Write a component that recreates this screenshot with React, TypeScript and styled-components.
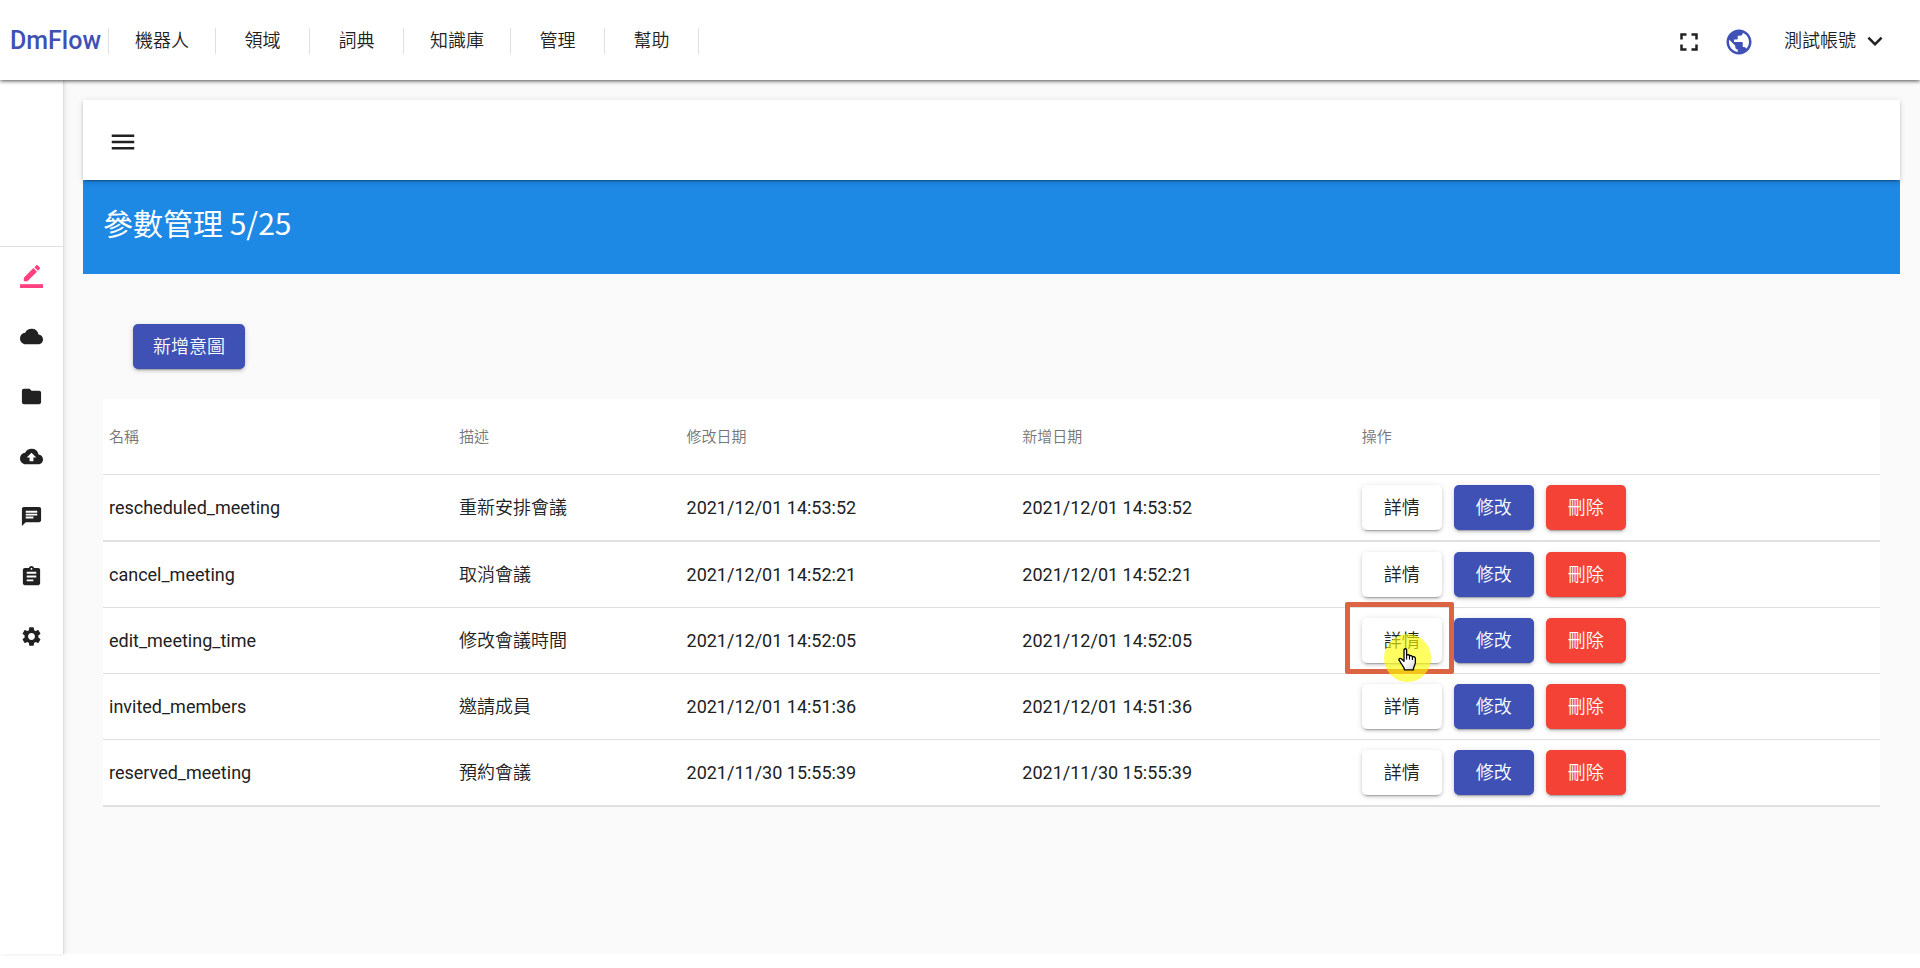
import React from "react";
import styled, { createGlobalStyle, css } from "styled-components";
import type { IconType } from "react-icons";
import {
  MdAssignment,
  MdBackup,
  MdChat,
  MdCloud,
  MdExpandMore,
  MdFolder,
  MdFullscreen,
  MdMenu,
  MdPublic,
  MdSettings,
} from "react-icons/md";

const font = `Roboto, "Noto Sans CJK TC", sans-serif`;
const ink = "#212121";
const indigo = "#3f51b5";
const line = "#e0e0e0";
const raised =
  "0 4px 1px -3px rgba(0,0,0,.2), 0 2px 3px 0 rgba(0,0,0,.14), 0 1px 6px 0 rgba(0,0,0,.12)";

const GlobalStyle = createGlobalStyle`
  *, *::before, *::after { box-sizing: border-box; }
  body {
    margin: 0;
    background: #fff;
    color: ${ink};
    font-family: ${font};
    font-size: 18px;
    line-height: 24px;
  }
  button { font: inherit; font-weight: 350; color: inherit; cursor: pointer; }
`;

const Page = styled.div`
  display: flex;
  flex-direction: column;
  min-height: 100vh;
  padding-bottom: 14px;
`;

const Header = styled.header`
  display: flex;
  align-items: center;
  height: 80px;
  padding: 2px 30px 0 10px;
  background: #fff;
  box-shadow: 0 1px 4px 0 rgba(0, 0, 0, 0.7);
  z-index: 2;
`;

const Brand = styled.a`
  padding-right: 7px;
  color: ${indigo};
  font-size: 25px;
  font-weight: 500;
  text-decoration: none;
`;

const Nav = styled.nav`
  display: flex;
  align-items: center;
  height: 26px;
  border-left: 1px solid ${line};
`;

const NavCell = styled.div`
  padding: 0 7px;
  border-right: 1px solid ${line};
`;

const NavButton = styled.button`
  min-width: 79px;
  height: 26px;
  padding: 0 19px;
  border: 0;
  background: none;
  white-space: nowrap;
`;

const HeaderTools = styled.div`
  display: flex;
  align-items: center;
  gap: 20px;
  margin-left: auto;
  padding-top: 2px;
`;

const IconButton = styled.button<{ $color?: string }>`
  display: flex;
  padding: 0;
  border: 0;
  background: none;
  color: ${(p) => p.$color ?? ink};
  font-size: 30px;
`;

const AccountButton = styled.button`
  display: flex;
  align-items: center;
  gap: 4px;
  margin-left: 10px;
  padding: 0 0 2px;
  border: 0;
  background: none;

  svg {
    font-size: 30px;
  }
`;

const Body = styled.div`
  display: flex;
  flex: 1;
`;

const Sidebar = styled.nav`
  flex: none;
  width: 64px;
  padding-top: 166px;
  border-right: 1px solid ${line};
  background: #fff;
  box-shadow: 1px 0 4px rgba(0, 0, 0, 0.1);
  z-index: 1;
`;

const SideList = styled.ul`
  margin: 0;
  padding: 0;
  border-top: 1px solid ${line};
  list-style: none;
`;

const SideLink = styled.a<{ $active?: boolean }>`
  display: flex;
  align-items: center;
  justify-content: center;
  height: 60px;
  padding-bottom: 1px;
  color: ${(p) => (p.$active ? "#ff4081" : ink)};
  font-size: 23px;
`;

const Main = styled.main`
  flex: 1;
  min-width: 0;
  padding: 20px 20px 20px 19px;
  background: #fafafa;
`;

const Toolbar = styled.div`
  position: relative;
  display: flex;
  align-items: center;
  height: 80px;
  padding: 4px 25px 0;
  background: #fff;
  box-shadow: ${raised};
`;

const TitleBar = styled.div`
  height: 94px;
  padding: 22px 20px;
  background: #1e88e5;
  color: #fff;
`;

const Title = styled.h1`
  margin: 0;
  font-family: "Noto Sans CJK TC", sans-serif;
  font-size: 30px;
  font-weight: 400;
  line-height: 40px;
`;

const Content = styled.section`
  padding: 50px 20px 0;
`;

type Tone = "plain" | "primary" | "warn";

const tones = {
  plain: css`
    background: #fff;
    color: ${ink};
  `,
  primary: css`
    background: ${indigo};
    color: #fff;
  `,
  warn: css`
    background: #f44336;
    color: #fff;
  `,
};

const RaisedButton = styled.button<{ $tone: Tone }>`
  min-width: 80px;
  height: 45px;
  padding: 0 20px;
  border: 0;
  border-radius: 5px;
  box-shadow: ${raised};
  white-space: nowrap;
  ${(p) => tones[p.$tone]}
`;

const CreateRow = styled.div`
  display: flex;
  padding: 0 30px 30px;
`;

const Table = styled.table`
  width: 100%;
  border-spacing: 0;
  table-layout: fixed;
  background: #fff;
  text-align: left;
`;

const Column = styled.col<{ $share?: number }>`
  width: ${(p) => (p.$share ? `${p.$share}%` : "auto")};
`;

const HeadCell = styled.th`
  height: 76px;
  padding: 0 6px;
  border-bottom: 1px solid ${line};
  color: #757575;
  font-size: 15px;
  font-weight: 350;
`;

const Cell = styled.td`
  padding: 10px 6px;
  border-bottom: 1px solid ${line};
`;

const TextCell = styled(Cell)`
  font-weight: 350;
`;

const Row = styled.tr`
  &:first-child td, &:last-child td {
    border-bottom-width: 2px;
  }
`;

const Actions = styled.div`
  display: flex;
  gap: 12px;
`;

const Spot = styled.div`
  position: relative;
  display: flex;
`;

const Frame = styled.div`
  position: absolute;
  inset: -16px -12px -11px -17px;
  border: 5px solid #db6443;
  border-radius: 2px;
  pointer-events: none;
`;

const Pointer = styled.div`
  position: absolute;
  top: 16px;
  left: 22px;
  display: flex;
  justify-content: center;
  width: 47px;
  height: 48px;
  padding-top: 14px;
  border-radius: 50%;
  background: rgba(255, 255, 0, 0.62);
  pointer-events: none;
  z-index: 1;
`;

const HandCursor = () => (
  <svg width="19" height="23" viewBox="0 0 19 23" aria-hidden="true">
    <defs>
      <linearGradient id="hand" x1="0" y1="0" x2="1" y2="1">
        <stop offset="0.5" stopColor="#fff" />
        <stop offset="1" stopColor="#d5d5d5" />
      </linearGradient>
    </defs>
    <path
      d="M6 1.8C6 .4 8.600 .4 8.600 1.800V7.300C9.500 6.300 11.300 6.600 11.500 7.900C12.600 7.100 14.200 7.500 14.400 8.900C15.700 8.300 17.400 9 17.400 10.500V14.500C17.400 16.500 15.500 18.500 15.400 21.800H6.500C6.300 19.200 4.500 17.800 3.400 15.800L1.100 12.200C.4 10.800 2 9.700 3.300 10.800L6 13.200Z"
      fill="url(#hand)"
      stroke="#000"
      strokeWidth="1.3"
      strokeLinejoin="round"
    />
    <path d="M8.600 7V11.500M11.500 8V11.500M14.400 9V12" stroke="#000" strokeWidth="1.1" fill="none" />
  </svg>
);

const PencilLine = () => (
  <svg width="1em" height="1em" viewBox="0 0 24 24" fill="currentColor" aria-hidden="true">
    <path d="M17.750 7 14 3.250l-10 10V17h3.750l10-10zm2.960-2.960c.39-.39.39-1.020 0-1.410L18.370.29a1 1 0 0 0-1.410 0L15 2.250 18.750 6l1.960-1.960z" />
    <path d="M0 20h24v4H0z" />
  </svg>
);

const menus = ["機器人", "領域", "詞典", "知識庫", "管理", "幫助"];

const sideItems: { label: string; Icon: IconType | typeof PencilLine }[] = [
  { label: "編輯", Icon: PencilLine },
  { label: "雲端", Icon: MdCloud },
  { label: "檔案", Icon: MdFolder },
  { label: "上傳", Icon: MdBackup },
  { label: "對話", Icon: MdChat },
  { label: "紀錄", Icon: MdAssignment },
  { label: "設定", Icon: MdSettings },
];

const shares = [19.7, 12.8, 18.9, 19.1, undefined];
const headings = ["名稱", "描述", "修改日期", "新增日期", "操作"];

const intents = [
  { name: "rescheduled_meeting", text: "重新安排會議", date: "2021/12/01 14:53:52" },
  { name: "cancel_meeting", text: "取消會議", date: "2021/12/01 14:52:21" },
  { name: "edit_meeting_time", text: "修改會議時間", date: "2021/12/01 14:52:05", marked: true },
  { name: "invited_members", text: "邀請成員", date: "2021/12/01 14:51:36" },
  { name: "reserved_meeting", text: "預約會議", date: "2021/11/30 15:55:39" },
];

export default function App() {
  return (
    <Page lang="zh-Hant">
      <GlobalStyle />
      <Header>
        <Brand href="#">DmFlow</Brand>
        <Nav>
          {menus.map((m) => (
            <NavCell key={m}>
              <NavButton type="button">{m}</NavButton>
            </NavCell>
          ))}
        </Nav>
        <HeaderTools>
          <IconButton type="button" aria-label="全螢幕">
            <MdFullscreen />
          </IconButton>
          <IconButton type="button" aria-label="語言" $color={indigo}>
            <MdPublic />
          </IconButton>
          <AccountButton type="button">
            測試帳號
            <MdExpandMore />
          </AccountButton>
        </HeaderTools>
      </Header>
      <Body>
        <Sidebar>
          <SideList>
            {sideItems.map(({ label, Icon }, i) => (
              <li key={label}>
                <SideLink href="#" aria-label={label} $active={i === 0}>
                  <Icon />
                </SideLink>
              </li>
            ))}
          </SideList>
        </Sidebar>
        <Main>
          <Toolbar>
            <IconButton type="button" aria-label="選單">
              <MdMenu />
            </IconButton>
          </Toolbar>
          <TitleBar>
            <Title>參數管理 5/25</Title>
          </TitleBar>
          <Content>
            <CreateRow>
              <RaisedButton type="button" $tone="primary">
                新增意圖
              </RaisedButton>
            </CreateRow>
            <Table>
              <colgroup>
                {shares.map((s, i) => (
                  <Column key={i} $share={s} />
                ))}
              </colgroup>
              <thead>
                <tr>
                  {headings.map((h) => (
                    <HeadCell key={h} scope="col">
                      {h}
                    </HeadCell>
                  ))}
                </tr>
              </thead>
              <tbody>
                {intents.map((it) => (
                  <Row key={it.name}>
                    <Cell>{it.name}</Cell>
                    <TextCell>{it.text}</TextCell>
                    <Cell>{it.date}</Cell>
                    <Cell>{it.date}</Cell>
                    <Cell>
                      <Actions>
                        <Spot>
                          <RaisedButton type="button" $tone="plain">
                            詳情
                          </RaisedButton>
                          {it.marked && (
                            <>
                              <Frame />
                              <Pointer>
                                <HandCursor />
                              </Pointer>
                            </>
                          )}
                        </Spot>
                        <RaisedButton type="button" $tone="primary">
                          修改
                        </RaisedButton>
                        <RaisedButton type="button" $tone="warn">
                          刪除
                        </RaisedButton>
                      </Actions>
                    </Cell>
                  </Row>
                ))}
              </tbody>
            </Table>
          </Content>
        </Main>
      </Body>
    </Page>
  );
}
